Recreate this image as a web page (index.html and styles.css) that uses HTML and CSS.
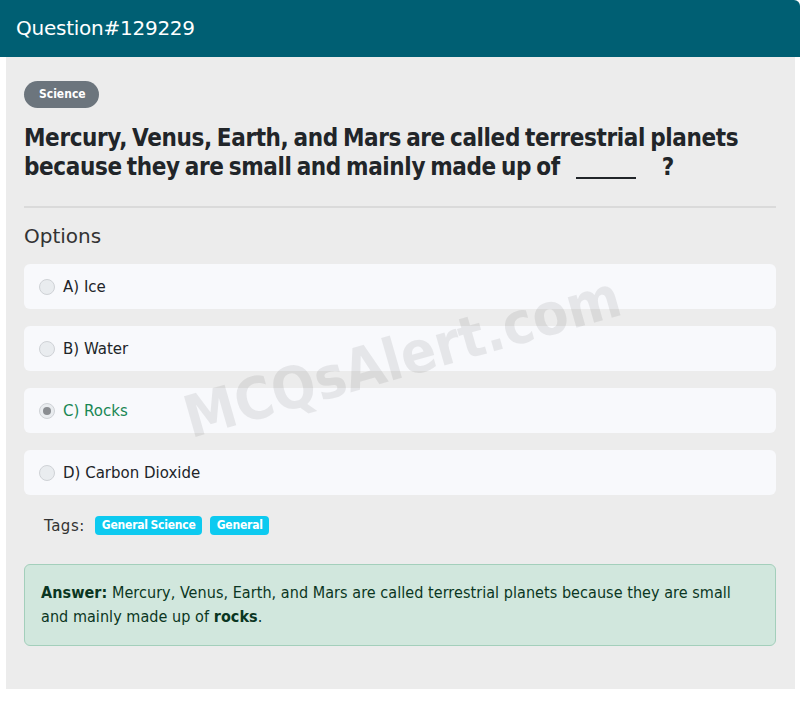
FILE: index.html
```html
<!DOCTYPE html>
<html lang="en">
<head>
<meta charset="utf-8">
<title>Question#129229</title>
<link rel="stylesheet" href="styles.css">
</head>
<body>
<div class="card">
  <div class="card-header">Question#129229</div>
  <div class="card-body">
    <div class="watermark">MCQsAlert.com</div>
    <span class="badge-subject">Science</span>
    <h1 class="question">Mercury, Venus, Earth, and Mars are called terrestrial planets because they are small and mainly made up of <span class="blank"></span>?</h1>
    <hr class="divider">
    <h2 class="options-title">Options</h2>
    <div class="options">
      <label class="option"><span class="radio"></span><span class="opt-text">A) Ice</span></label>
      <label class="option"><span class="radio"></span><span class="opt-text">B) Water</span></label>
      <label class="option correct"><span class="radio checked"></span><span class="opt-text">C) Rocks</span></label>
      <label class="option"><span class="radio"></span><span class="opt-text">D) Carbon Dioxide</span></label>
    </div>
    <div class="tags">
      <span class="tags-label">Tags:</span>
      <span class="tag">General Science</span>
      <span class="tag">General</span>
    </div>
    <div class="answer"><strong>Answer:</strong> Mercury, Venus, Earth, and Mars are called terrestrial planets because they are small and mainly made up of <strong>rocks</strong>.</div>
  </div>
</div>
</body>
</html>
```
FILE: styles.css
```css
* { box-sizing: border-box; }
html, body { margin: 0; padding: 0; background: #ffffff; }
body { font-family: "DejaVu Sans", sans-serif; color: #212529; width: 800px; }

.card {
  width: 800px;
}
.card-header {
  background: #005f73;
  color: #ffffff;
  height: 57px;
  padding: 15px 16px 0;
  font-size: 20px;
  line-height: 26px;
  letter-spacing: -0.25px;
  border-top-right-radius: 6px;
}
.card-body {
  position: relative;
  margin: 0 5px 0 6px;
  background: #ececec;
  padding: 24px 19px 43px 18px;
  overflow: hidden;
}
.watermark {
  position: absolute;
  left: 187px;
  top: 334px;
  font-family: "DejaVu Sans Condensed", "DejaVu Sans", sans-serif;
  font-size: 58px;
  font-weight: 700;
  line-height: 54px;
  color: rgba(0, 0, 0, 0.075);
  transform: rotate(-16deg);
  transform-origin: 0 100%;
  pointer-events: none;
  z-index: 2;
  white-space: nowrap;
}
.badge-subject {
  display: inline-block;
  background: #6c757d;
  color: #fff;
  font-family: "DejaVu Sans Condensed", "DejaVu Sans", sans-serif;
  font-size: 12px;
  font-weight: 700;
  line-height: 27px;
  height: 27px;
  padding: 0 13px 0 15px;
  border-radius: 14px;
}
.question {
  margin: 16px 0 0;
  font-family: "DejaVu Sans Condensed", "DejaVu Sans", sans-serif;
  font-size: 24px;
  line-height: 29px;
  font-weight: 700;
  letter-spacing: -0.38px;
  word-spacing: -2px;
  color: #212529;
}
.blank {
  display: inline-block;
  width: 60px;
  height: 2px;
  background: #212529;
  margin: 0 26px 0 11px;
  vertical-align: -4px;
}
.divider {
  margin: 24px 0 0;
  border: 0;
  border-top: 2px solid #dadada;
}
.options-title {
  margin: 16px 0 0;
  font-size: 20px;
  line-height: 24px;
  font-weight: 400;
  color: #333;
}
.options {
  margin-top: 16px;
  display: flex;
  flex-direction: column;
  gap: 17px;
}
.option {
  display: flex;
  align-items: center;
  height: 45px;
  background: #f8f9fc;
  border-radius: 6px;
  padding-left: 15px;
  font-size: 15px;
  color: #212529;
}
.radio {
  width: 16px;
  height: 16px;
  border-radius: 50%;
  border: 1px solid #cfd2d6;
  background: #e9ecef;
  margin-right: 8px;
  display: flex;
  align-items: center;
  justify-content: center;
}
.radio.checked::after {
  content: "";
  width: 8px;
  height: 8px;
  border-radius: 50%;
  background: #8a8d91;
}
.option.correct .opt-text { color: #198754; }
.tags {
  display: flex;
  align-items: center;
  gap: 8px;
  margin-top: 21px;
  padding-left: 20px;
  height: 19px;
}
.tags-label { font-size: 15px; color: #333; margin-right: 2px; letter-spacing: 0.5px; }
.tag {
  background: #0dcaf0;
  color: #fff;
  font-family: "DejaVu Sans Condensed", "DejaVu Sans", sans-serif;
  font-size: 12px;
  font-weight: 700;
  line-height: 19px;
  padding: 0 6px 0 7px;
  border-radius: 4px;
  letter-spacing: -0.2px;
  word-spacing: -1px;
}
.answer {
  margin-top: 29px;
  background: #d1e7dd;
  border: 1px solid #a3cfbb;
  border-radius: 6px;
  padding: 16px 24px 16px 16px;
  font-family: "DejaVu Sans Condensed", "DejaVu Sans", sans-serif;
  font-size: 16px;
  line-height: 24px;
  letter-spacing: 0.06px;
  color: #0a3622;
}
.answer strong { font-weight: 700; }
```
